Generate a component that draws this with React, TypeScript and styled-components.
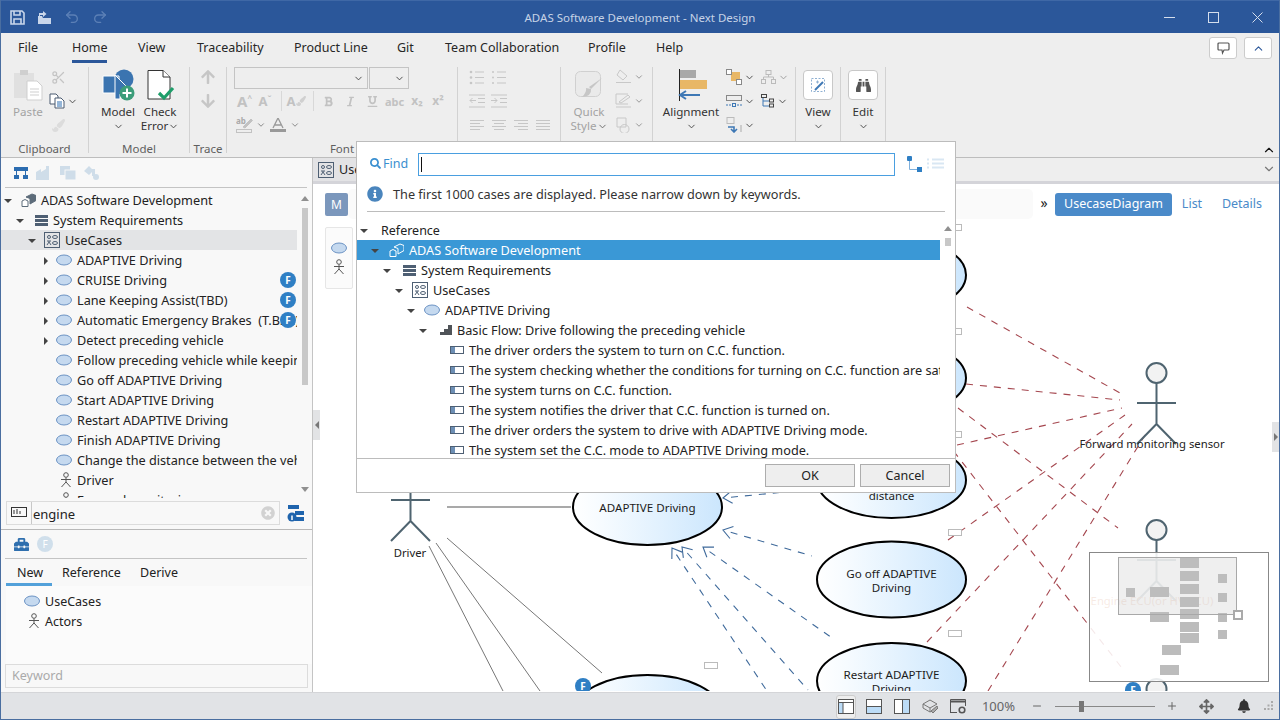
import React from 'react'
import styled, { createGlobalStyle } from 'styled-components'
import { ChevronDown, ChevronUp, Undo2, Redo2, Scissors, Minus, Plus } from 'lucide-react'
import { FaBell, FaBinoculars, FaInfoCircle, FaSearch, FaArrowUp, FaArrowDown, FaBold, FaItalic, FaUnderline, FaArrowsAlt, FaPaintBrush, FaTimesCircle, FaToolbox } from 'react-icons/fa'

const Global = createGlobalStyle`
  html, body { margin: 0; padding: 0; width: 1280px; height: 720px; overflow: hidden; }
  body { font-family: "Noto Sans", "Open Sans", sans-serif; font-size: 12.5px; color: #222; }
  * { box-sizing: border-box; }
`

const Win = styled.div`
  position: relative;
  width: 1280px;
  height: 720px;
  display: flex;
  flex-direction: column;
  background: #eee;
  border-left: 1px solid #4a6ea0;
  border-right: 1px solid #4a6ea0;
  border-bottom: 1px solid #4a6ea0;
  overflow: hidden;
`
const TitleBar = styled.div`
  height: 33px;
  flex: none;
  margin: 0 -1px;
  background: #2b579a;
  border-top: 1px solid #3f68a6;
  display: grid;
  grid-template-columns: 1fr auto 1fr;
  align-items: center;
`
const Qat = styled.div`
  display: flex;
  align-items: center;
  gap: 12px;
  padding-left: 10px;
`
const Title = styled.div`
  color: #c6d3e6;
  font-size: 11.5px;
`
const WinBtns = styled.div`
  display: flex;
  justify-content: flex-end;
  padding-right: 1px;
`
const WinBtn = styled.div`
  width: 44px;
  display: flex;
  justify-content: center;
  align-items: center;
`
const MenuRow = styled.div`
  height: 30px;
  flex: none;
  display: flex;
  padding-left: 17px;
  position: relative;
`
const MenuTab = styled.div<{ $w: number; $on?: boolean }>`
  width: ${p => p.$w}px;
  height: 30px;
  line-height: 29px;
  font-size: 12.5px;
  color: #262626;
  white-space: nowrap;
  position: relative;
  ${p =>
    p.$on &&
    `&::after { content: ''; position: absolute; left: 0; width: 35px; bottom: 0; height: 3px; background: #2b579a; }`}
`
const TopBtns = styled.div`
  position: absolute;
  right: 7px;
  top: 4px;
  display: flex;
  gap: 7px;
`
const TopBtn = styled.div`
  width: 28px;
  height: 22px;
  background: #fff;
  border: 1px solid #ccc;
  border-radius: 3px;
  display: flex;
  align-items: center;
  justify-content: center;
`
const Ribbon = styled.div`
  height: 95px;
  flex: none;
  display: flex;
  border-bottom: 1px solid #bdbdbd;
  position: relative;
`
const Group = styled.div<{ $w: number }>`
  width: ${p => p.$w}px;
  flex: none;
  display: flex;
  flex-direction: column;
  position: relative;
  margin: 4px 0 4px;
  border-right: 1px solid #d2d2d2;
`
const GroupBody = styled.div<{ $pad?: number }>`
  flex: 1;
  display: flex;
  padding-left: ${p => p.$pad ?? 0}px;
`
const GroupLabel = styled.div`
  height: 9px;
  line-height: 10px;
  text-align: center;
  font-size: 11.5px;
  color: #5f5f5f;
`
const Big = styled.div<{ $w: number; $off?: boolean }>`
  width: ${p => p.$w}px;
  display: flex;
  flex-direction: column;
  align-items: center;
  flex: none;
  color: ${p => (p.$off ? '#a3a3a3' : '#333')};
  font-size: 11.6px;
  line-height: 14px;
  white-space: nowrap;
`
const BigIcon = styled.div`
  height: 36px;
  display: flex;
  align-items: center;
  justify-content: center;
  margin-bottom: 2px;
`
const BigLine = styled.div`
  height: 14px;
  display: flex;
  align-items: center;
  justify-content: center;
`
const SmallCol = styled.div<{ $w: number }>`
  width: ${p => p.$w}px;
  flex: none;
  display: flex;
  flex-direction: column;
  margin-top: -2px;
`
const SmallItem = styled.div<{ $pad?: number }>`
  height: 24px;
  display: flex;
  align-items: center;
  gap: 2px;
  padding-left: ${p => p.$pad ?? 0}px;
`
const Combo = styled.div<{ $w: number }>`
  width: ${p => p.$w}px;
  height: 22px;
  border: 1px solid #c4c4c4;
  display: flex;
  align-items: center;
  justify-content: flex-end;
  padding-right: 3px;
  margin-right: 1px;
`
const FontBox = styled.div`
  display: flex;
  flex-direction: column;
  padding: 0 0 0 7px;
`
const FontRow = styled.div<{ $h: number }>`
  display: flex;
  align-items: center;
  height: ${p => p.$h}px;
`
const FontCell = styled.div<{ $w: number; $fs?: number }>`
  width: ${p => p.$w}px;
  display: flex;
  justify-content: center;
  align-items: center;
  color: #c2c2c2;
  font-size: ${p => p.$fs ?? 11}px;
  font-weight: 700;
  line-height: 1;
`
const Hat = styled.span`
  font-size: 8px;
  align-self: flex-start;
`
const VSep = styled.div`
  width: 1px;
  height: 20px;
  background: #d8d8d8;
  margin: 0 3px 0 6px;
`
const ParaGrid = styled.div`
  display: grid;
  grid-template-columns: repeat(4, 22px);
  grid-auto-rows: 24px;
  margin-top: -2px;
  padding-left: 8px;
  align-items: center;
  justify-items: center;
`
const OffBtn = styled.div`
  width: 30px;
  height: 30px;
  background: #fff;
  border: 1px solid #c8c8c8;
  border-radius: 4px;
  display: flex;
  align-items: center;
  justify-content: center;
`
const CollapseMark = styled.div`
  position: absolute;
  right: 3px;
  bottom: 0;
  height: 14px;
  display: flex;
  color: #111;
`
const Main = styled.div`
  flex: 1;
  min-height: 0;
  display: flex;
  position: relative;
`
const LeftPane = styled.div`
  width: 312px;
  flex: none;
  display: flex;
  flex-direction: column;
  background: #f8f8f8;
  border-right: 1px solid #c4c4c4;
`
const PaneBar = styled.div<{ $h: number }>`
  height: ${p => p.$h}px;
  flex: none;
  display: flex;
  align-items: center;
  gap: 8px;
  margin: 0 5px 0 4px;
  padding: 0 10px 0 9px;
  border-bottom: 1px solid #c4c4c4;
`
const TreeZone = styled.div`
  height: 310px;
  flex: none;
  display: flex;
  padding-top: 2px;
  overflow: hidden;
`
const TreeCol = styled.div`
  width: 296px;
  flex: none;
`
const Row = styled.div<{ $level: number; $sel?: 'gray' | 'blue'; $base?: number }>`
  position: relative;
  height: 20px;
  display: flex;
  align-items: center;
  white-space: pre;
  overflow: hidden;
  padding-left: ${p => (p.$base ?? 2) + p.$level * 12}px;
  background: ${p => (p.$sel === 'gray' ? '#e3e4e6' : p.$sel === 'blue' ? '#3a98d6' : 'transparent')};
  color: ${p => (p.$sel === 'blue' ? '#fff' : '#222')};
  font-size: 12.7px;
`
const Caret = styled.div<{ $open?: boolean; $hide?: boolean }>`
  width: 10px;
  flex: none;
  height: 10px;
  margin-top: 1px;
  display: flex;
  align-items: center;
  justify-content: center;
  visibility: ${p => (p.$hide ? 'hidden' : 'visible')};
  &::before {
    content: '';
    border-style: solid;
    ${p =>
      p.$open
        ? `border-width: 4px 4px 0 4px; border-color: #444 transparent transparent transparent;`
        : `border-width: 4px 0 4px 4px; border-color: transparent transparent transparent #444; transform: translateX(2px);`}
  }
`
const RowIcon = styled.div<{ $w: number }>`
  width: ${p => p.$w}px;
  flex: none;
  display: flex;
  justify-content: flex-end;
  align-items: center;
  padding-right: 5px;
`
const Badge = styled.div`
  position: absolute;
  right: 1px;
  top: 2px;
  width: 16px;
  height: 16px;
  border-radius: 50%;
  background: #2f7fc4;
  color: #fff;
  font-size: 10px;
  font-weight: 700;
  display: flex;
  align-items: center;
  justify-content: center;
`
const ScrollTrack = styled.div<{ $h: number; $thumbTop: number; $thumbH: number }>`
  position: relative;
  width: 6px;
  height: ${p => p.$h}px;
  margin-left: 5px;
  flex: none;
  &::before {
    content: '';
    position: absolute;
    left: 0;
    top: ${p => p.$thumbTop}px;
    width: 6px;
    height: ${p => p.$thumbH}px;
    background: #c8c8c8;
  }
`
const ScrollArrow = styled.div<{ $down?: boolean }>`
  position: absolute;
  left: -1px;
  ${p => (p.$down ? 'bottom: 6px;' : 'top: 6px;')}
  border-style: solid;
  border-width: ${p => (p.$down ? '5px 4px 0 4px' : '0 4px 5px 4px')};
  border-color: ${p => (p.$down ? '#909090 transparent transparent' : 'transparent transparent #909090')};
`
const SearchRow = styled.div`
  height: 32px;
  flex: none;
  display: flex;
  align-items: center;
  gap: 7px;
  padding: 0 0 1px 5px;
  border-bottom: 1px solid #b8b8b8;
`
const SearchBox = styled.div`
  width: 274px;
  height: 24px;
  border: 1px solid #dcdcdc;
  display: flex;
  align-items: center;
  font-size: 13px;
  padding-right: 4px;
`
const SearchLead = styled.div`
  width: 25px;
  height: 22px;
  border-right: 1px solid #c8c8c8;
  display: flex;
  align-items: center;
  justify-content: center;
  margin-right: 1px;
  flex: none;
`
const SearchText = styled.div`
  flex: 1;
  padding-top: 1px;
`
const TabsRow = styled.div`
  height: 27px;
  flex: none;
  display: flex;
  padding-left: 5px;
`
const PaneTab = styled.div<{ $w: number; $on?: boolean }>`
  width: ${p => p.$w}px;
  height: 27px;
  line-height: 27px;
  padding-left: ${p => (p.$on ? 11 : 10)}px;
  border-bottom: 3px solid ${p => (p.$on ? '#53a1da' : 'transparent')};
  font-size: 12.5px;
`
const PaletteList = styled.div`
  flex: 1;
  background: #fbfbfb;
  margin-left: 5px;
  padding-top: 5px;
`
const PaletteRow = styled.div`
  height: 20px;
  display: flex;
  align-items: center;
  font-size: 12.5px;
`
const PaletteIcon = styled.div`
  width: 39px;
  flex: none;
  display: flex;
  justify-content: flex-end;
  padding-right: 5px;
`
const KeywordBox = styled.div`
  height: 24px;
  flex: none;
  margin: 0 4px 4px 4px;
  border: 1px solid #dcdcdc;
  background: #f8f8f8;
  padding-left: 6px;
  line-height: 22px;
  color: #aaa;
  font-size: 12.5px;
`
const Doc = styled.div`
  flex: 1;
  min-width: 0;
  display: flex;
  flex-direction: column;
`
const DocTabs = styled.div`
  height: 23px;
  flex: none;
  display: flex;
  align-items: center;
  background: #eee;
  position: relative;
`
const DocTab = styled.div`
  height: 23px;
  width: 60px;
  padding-left: 5px;
  display: flex;
  align-items: center;
  gap: 5px;
  background: #e3e3e5;
  font-size: 12.5px;
`
const DocChevron = styled.div`
  position: absolute;
  right: 3px;
  top: 4px;
  color: #777;
  display: flex;
`
const DocRule = styled.div`
  height: 3px;
  flex: none;
  background: #d4d4d9;
`
const Canvas = styled.div`
  flex: 1;
  min-height: 0;
  position: relative;
  background: #fff;
  overflow: hidden;
`
const DiagramSvg = styled.svg`
  position: absolute;
  left: 0;
  top: 0;
`
const DocHead = styled.div`
  position: relative;
  display: flex;
  align-items: center;
  height: 30px;
  margin: 5px 0 0 12px;
`
const ModelMark = styled.div`
  width: 23px;
  height: 23px;
  background: #7b97bc;
  border-radius: 2px;
  color: #fff;
  font-size: 12px;
  display: flex;
  align-items: center;
  justify-content: center;
  flex: none;
`
const Crumb = styled.div`
  width: 685px;
  height: 30px;
  flex: none;
  background: #fafafa;
  border-radius: 5px;
`
const Chev = styled.div`
  width: 22px;
  flex: none;
  text-align: center;
  font-size: 14px;
  color: #222;
  margin-top: -3px;
`
const ViewTab = styled.div<{ $on?: boolean; $w: number }>`
  width: ${p => p.$w}px;
  flex: none;
  height: 23px;
  line-height: 22px;
  text-align: center;
  border-radius: 3px;
  font-size: 12.5px;
  background: ${p => (p.$on ? '#4a8ac9' : 'transparent')};
  color: ${p => (p.$on ? '#fff' : '#4a8ac9')};
`
const SidePalette = styled.div`
  position: relative;
  margin: 8px 0 0 12px;
  width: 28px;
  height: 62px;
  background: #fbfbfb;
  border: 1px solid #e6e6e6;
  border-radius: 2px;
  display: flex;
  flex-direction: column;
  align-items: center;
  justify-content: center;
  gap: 5px;
`
const Handle = styled.div<{ $side: 'left' | 'right'; $y: number }>`
  position: absolute;
  top: ${p => p.$y}px;
  ${p => (p.$side === 'left' ? 'left: 312px;' : 'right: 0;')}
  width: 7px;
  height: 30px;
  background: #e2e3e5;
  display: flex;
  align-items: center;
  justify-content: center;
  &::before {
    content: '';
    border-style: solid;
    ${p =>
      p.$side === 'left'
        ? 'border-width: 4px 4px 4px 0; border-color: transparent #777 transparent transparent;'
        : 'border-width: 4px 0 4px 4px; border-color: transparent transparent transparent #777;'}
  }
`
const Minimap = styled.div`
  position: absolute;
  right: 10px;
  bottom: 10px;
  width: 180px;
  height: 130px;
  background: rgba(255, 255, 255, 0.88);
  border: 1px solid #888;
`
const MiniNode = styled.div<{ $x: number; $y: number; $w: number; $h: number }>`
  position: absolute;
  left: ${p => p.$x}px;
  top: ${p => p.$y}px;
  width: ${p => p.$w}px;
  height: ${p => p.$h}px;
  background: #bcbcbc;
`
const MiniView = styled.div`
  position: absolute;
  left: 28px;
  top: 4px;
  width: 119px;
  height: 58px;
  background: rgba(190, 190, 190, 0.25);
  border: 1px solid #a8a8a8;
`
const MiniGrip = styled.div`
  position: absolute;
  left: 143px;
  top: 57px;
  width: 10px;
  height: 10px;
  background: #fff;
  border: 2px solid #aaa;
`
const StatusBar = styled.div`
  height: 27px;
  flex: none;
  display: flex;
  justify-content: flex-end;
  align-items: center;
  background: #e1e3e6;
  border-top: 1px solid #d4d5d8;
`
const StatusCell = styled.div<{ $w: number; $on?: boolean }>`
  width: ${p => p.$w}px;
  height: 24px;
  display: flex;
  align-items: center;
  justify-content: center;
  color: #666;
  font-size: 13px;
  position: relative;
  ${p =>
    p.$on &&
    `&::before { content: ''; position: absolute; left: 4px; right: 4px; top: 1px; bottom: -1px; background: #eee; border: 1px solid #ccc; border-radius: 3px; }
     & > * { position: relative; }`}
`
const SliderTrack = styled.div`
  position: relative;
  width: 100px;
  height: 1px;
  background: #888;
  &::after {
    content: '';
    position: absolute;
    left: 24px;
    top: -5px;
    width: 5px;
    height: 11px;
    background: #777;
  }
`
const Dialog = styled.div`
  position: absolute;
  left: 355px;
  top: 141px;
  width: 600px;
  height: 352px;
  background: #fff;
  border: 1px solid #bcbcbc;
  display: flex;
  flex-direction: column;
`
const FindRow = styled.div`
  height: 44px;
  flex: none;
  display: flex;
  align-items: center;
  padding: 0 10px 0 13px;
`
const FindLabel = styled.div`
  width: 48px;
  flex: none;
  display: flex;
  align-items: center;
  gap: 2px;
  margin-top: -2px;
  color: #3a8fd0;
  font-size: 12.5px;
`
const FindInput = styled.div`
  width: 477px;
  height: 23px;
  flex: none;
  border: 1px solid #4a9fe0;
  padding: 3px 0 0 2px;
  &::before {
    content: '';
    display: block;
    width: 1px;
    height: 15px;
    background: #111;
  }
`
const FindModes = styled.div`
  display: flex;
  gap: 4px;
  margin-left: 12px;
  align-items: center;
`
const InfoRow = styled.div`
  height: 26px;
  flex: none;
  margin: 0 10px;
  display: flex;
  align-items: center;
  gap: 10px;
  color: #333;
  font-size: 12.7px;
  padding: 0 0 10px 0;
  border-bottom: 1px solid #bcbcbc;
`
const DialogTree = styled.div`
  flex: 1;
  min-height: 0;
  display: flex;
  overflow: hidden;
  padding-top: 8px;
`
const DialogCol = styled.div`
  width: 583px;
  flex: none;
`
const RefRow = styled.div`
  height: 20px;
  display: flex;
  align-items: center;
  padding-left: 2px;
  gap: 12px;
  font-size: 12.5px;
`
const Foot = styled.div`
  height: 34px;
  flex: none;
  border-top: 1px solid #bcbcbc;
  display: flex;
  justify-content: flex-end;
  align-items: center;
  gap: 5px;
  padding: 0 5px 0 0;
`
const Btn = styled.div`
  width: 90px;
  height: 23px;
  line-height: 21px;
  text-align: center;
  background: #eee;
  border: 1px solid #adadad;
  font-size: 12.5px;
`

const Ellipse = ({ fill = '#c5d9ef' }: { fill?: string }) => (
  <svg width="16" height="12" viewBox="0 0 16 12">
    <ellipse cx="8" cy="6" rx="7.5" ry="5" fill={fill} stroke="#6c93c4" />
  </svg>
)
const Actor = () => (
  <svg width="12" height="16" viewBox="0 0 12 16" fill="none" stroke="#555">
    <circle cx="6" cy="3" r="2.3" />
    <path d="M6 5.5V10M1 7.5H11M6 10L1.5 15M6 10L10.5 15" />
  </svg>
)
const ModelPkg = ({ light }: { light?: boolean }) => (
  <svg width="15" height="15" viewBox="0 0 15 15">
    <path d="M5 4L11 1L15 2.5V7.5L9 11V5.5Z" fill={light ? '#3a98d6' : '#5d6c7a'} stroke={light ? '#fff' : '#5d6c7a'} />
    <path d="M1 8L4 6.5L7 8V13.5H1Z" fill={light ? '#3a98d6' : '#fff'} stroke={light ? '#fff' : '#5d6c7a'} />
  </svg>
)
const Stack = () => (
  <svg width="13" height="11" viewBox="0 0 13 11" fill="#4e5f73">
    <rect y="0" width="13" height="3" />
    <rect y="4" width="13" height="3" />
    <rect y="8" width="13" height="3" />
  </svg>
)
const UseCaseBox = () => (
  <svg width="16" height="16" viewBox="0 0 16 16" fill="none" stroke="#4e5f73">
    <rect x="0.5" y="0.5" width="15" height="15" />
    <circle cx="5" cy="5" r="1.5" />
    <ellipse cx="11" cy="5" rx="2.5" ry="1.5" />
    <path d="M3 9H7M5 9V10M3 13L5 10L7 13" />
    <ellipse cx="11" cy="11" rx="2.5" ry="1.5" />
  </svg>
)
const FlowSteps = () => (
  <svg width="12" height="10" viewBox="0 0 12 10" fill="#4f5358">
    <path d="M0 10V7H4V4H8V0H12V10Z" />
  </svg>
)
const StepBox = () => (
  <svg width="14" height="8" viewBox="0 0 14 8">
    <rect x="0.5" y="0.5" width="13" height="7" fill="#fff" stroke="#4e5f73" />
    <rect x="1" y="1" width="4" height="6" fill="#6d8fb5" />
  </svg>
)

type Item = { t: string; l: number; i?: React.ReactNode; c?: 'o' | 'c'; f?: boolean; sel?: 'gray' | 'blue' }

const leftTree: Item[] = [
  { t: 'ADAS Software Development', l: 0, i: <ModelPkg />, c: 'o' },
  { t: 'System Requirements', l: 1, i: <Stack />, c: 'o' },
  { t: 'UseCases', l: 2, i: <UseCaseBox />, c: 'o', sel: 'gray' },
  { t: 'ADAPTIVE Driving', l: 3, i: <Ellipse />, c: 'c' },
  { t: 'CRUISE Driving', l: 3, i: <Ellipse />, c: 'c', f: true },
  { t: 'Lane Keeping Assist(TBD)', l: 3, i: <Ellipse />, c: 'c', f: true },
  { t: 'Automatic Emergency Brakes  (T.B.D.)', l: 3, i: <Ellipse />, c: 'c', f: true },
  { t: 'Detect preceding vehicle', l: 3, i: <Ellipse />, c: 'c' },
  { t: 'Follow preceding vehicle while keeping the distance', l: 3, i: <Ellipse /> },
  { t: 'Go off ADAPTIVE Driving', l: 3, i: <Ellipse /> },
  { t: 'Start ADAPTIVE Driving', l: 3, i: <Ellipse /> },
  { t: 'Restart ADAPTIVE Driving', l: 3, i: <Ellipse /> },
  { t: 'Finish ADAPTIVE Driving', l: 3, i: <Ellipse /> },
  { t: 'Change the distance between the vehicles', l: 3, i: <Ellipse /> },
  { t: 'Driver', l: 3, i: <Actor /> },
  { t: 'Forward monitoring sensor', l: 3, i: <Actor /> }
]

const dialogTree: Item[] = [
  { t: 'ADAS Software Development', l: 0, i: <ModelPkg light />, c: 'o', sel: 'blue' },
  { t: 'System Requirements', l: 1, i: <Stack />, c: 'o' },
  { t: 'UseCases', l: 2, i: <UseCaseBox />, c: 'o' },
  { t: 'ADAPTIVE Driving', l: 3, i: <Ellipse />, c: 'o' },
  { t: 'Basic Flow: Drive following the preceding vehicle', l: 4, i: <FlowSteps />, c: 'o' },
  { t: 'The driver orders the system to turn on C.C. function.', l: 5, i: <StepBox /> },
  { t: 'The system checking whether the conditions for turning on C.C. function are satisfied.', l: 5, i: <StepBox /> },
  { t: 'The system turns on C.C. function.', l: 5, i: <StepBox /> },
  { t: 'The system notifies the driver that C.C. function is turned on.', l: 5, i: <StepBox /> },
  { t: 'The driver orders the system to drive with ADAPTIVE Driving mode.', l: 5, i: <StepBox /> },
  { t: 'The system set the C.C. mode to ADAPTIVE Driving mode.', l: 5, i: <StepBox /> }
]

const TreeRows = ({ items, base, iconW }: { items: Item[]; base?: number; iconW: number }) => (
  <>
    {items.map(it => (
      <Row key={it.t} $level={it.l} $sel={it.sel} $base={base}>
        <Caret $open={it.c === 'o'} $hide={!it.c} />
        <RowIcon $w={iconW}>{it.i}</RowIcon>
        {it.t}
        {it.f && <Badge>F</Badge>}
      </Row>
    ))}
  </>
)

const menus = [
  { t: 'File', w: 54 },
  { t: 'Home', w: 66, on: true },
  { t: 'View', w: 59 },
  { t: 'Traceability', w: 97 },
  { t: 'Product Line', w: 103 },
  { t: 'Git', w: 48 },
  { t: 'Team Collaboration', w: 143 },
  { t: 'Profile', w: 68 },
  { t: 'Help', w: 40 }
]

const Down = ({ c = '#444', s = 11 }: { c?: string; s?: number }) => <ChevronDown size={s} color={c} strokeWidth={2} />

const Lines = ({ kind }: { kind: string }) => {
  const c = '#c6c6c6'
  if (kind === 'bullet' || kind === 'number')
    return (
      <svg width="16" height="15" viewBox="0 0 16 15" stroke={c} fill={c}>
        {[2, 7.5, 13].map(y => (
          <g key={y}>
            <circle cx="2" cy={y} r={kind === 'bullet' ? 1.3 : 1} stroke="none" />
            <path d={`M6 ${y}H15`} />
          </g>
        ))}
      </svg>
    )
  if (kind === 'out' || kind === 'in')
    return (
      <svg width="16" height="14" viewBox="0 0 16 14" stroke={c} fill="none">
        <path d="M0 1H16M9 4.5H16M9 8.5H16M0 13H16" />
        <path d={kind === 'out' ? 'M7 6.5H1M3.5 4L1 6.5L3.5 9' : 'M0 6.5H6M3.5 4L6 6.5L3.5 9'} />
      </svg>
    )
  const ends: Record<string, number[]> = { left: [14, 10, 14, 10], center: [14, 10, 14, 10], right: [14, 10, 14, 10], just: [14, 14, 14, 14] }
  return (
    <svg width="14" height="12" viewBox="0 0 14 12" stroke={c}>
      {ends[kind].map((w, i) => {
        const x = kind === 'left' || kind === 'just' ? 0 : kind === 'center' ? (14 - w) / 2 : 14 - w
        return <path key={i} d={`M${x} ${1.5 + i * 3}H${x + w}`} />
      })}
    </svg>
  )
}

const diagramRed: [number, number, number, number][] = [
  [967, 307, 1120, 393],
  [966, 384, 1120, 400],
  [957, 445, 1122, 408],
  [948, 540, 1125, 415],
  [927, 642, 1132, 424],
  [988, 691, 1145, 435],
  [958, 408, 1118, 528],
  [945, 440, 1125, 672]
]
const diagramBlue: [number, number, number, number][] = [
  [723, 498, 785, 492],
  [723, 530, 812, 556],
  [703, 547, 835, 640],
  [682, 547, 808, 690],
  [672, 548, 767, 691]
]
const diagramGray: [number, number, number, number][] = [
  [447, 538, 602, 673],
  [436, 543, 540, 691],
  [429, 546, 503, 691]
]
const tinyLabels = [
  [948, 224],
  [948, 328],
  [948, 431],
  [948, 529],
  [948, 630],
  [704, 662]
]
const useCases = [
  { x: 891.5, y: 275, t: [] as string[], b: [] as number[] },
  { x: 891.5, y: 378, t: [] as string[], b: [] as number[] },
  { x: 891.5, y: 480, t: ['distance'], b: [19.5] },
  { x: 647.5, y: 507, t: ['ADAPTIVE Driving'], b: [5] },
  { x: 891.5, y: 579.5, t: ['Go off ADAPTIVE', 'Driving'], b: [-2, 12] },
  { x: 891.5, y: 681, t: ['Restart ADAPTIVE', 'Driving'], b: [-2, 12] },
  { x: 647.5, y: 713, t: [] as string[], b: [] as number[] }
]
const actors = [
  { x: 410.5, y: 470, label: 'Driver', c: '#222', lx: 410, ly: 557 },
  { x: 1156.5, y: 373, label: 'Forward monitoring sensor', c: '#222', lx: 1152, ly: 448 },
  { x: 1156.5, y: 530, label: 'Engine ECU(or HV-ECU)', c: '#b9561c', lx: 1152, ly: 605 },
  { x: 1156.5, y: 689, label: '', c: '#222', lx: 0, ly: 0 }
]

const Diagram = () => (
  <DiagramSvg width="966" height="507" viewBox="313 184 966 507">
    <defs>
      <linearGradient id="uc" x1="0" x2="1" y1="0" y2="0">
        <stop offset="0" stopColor="#ffffff" />
        <stop offset="0.2" stopColor="#f6fbff" />
        <stop offset="1" stopColor="#cbe6fd" />
      </linearGradient>
    </defs>
    <path d="M447 507H571" stroke="#a9a9a9" strokeWidth="2" />
    {diagramGray.map(([a, b, c, d]) => (
      <line key={a} x1={a} y1={b} x2={c} y2={d} stroke="#777" />
    ))}
    {diagramRed.map(([a, b, c, d]) => (
      <line key={a} x1={a} y1={b} x2={c} y2={d} stroke="#a5474f" strokeWidth="1.1" strokeDasharray="7 7" />
    ))}
    {diagramBlue.map(([a, b, c, d]) => {
      const ang = Math.atan2(d - b, c - a)
      const tip = (da: number) => `${a + 11 * Math.cos(ang + da)} ${b + 11 * Math.sin(ang + da)}`
      return (
        <g key={a + b} stroke="#3f6a9b" fill="none" strokeWidth="1.1">
          <path d={`M${tip(0.6)}L${a} ${b}L${tip(-0.6)}`} />
          <line x1={a + 8 * Math.cos(ang)} y1={b + 8 * Math.sin(ang)} x2={c} y2={d} strokeDasharray="7 7" />
        </g>
      )
    })}
    {tinyLabels.map(([x, y]) => (
      <rect key={y} x={x + 0.5} y={y + 0.5} width="13" height="6" fill="#fff" stroke="#bbb" />
    ))}
    {useCases.map(u => (
      <g key={u.y + u.x}>
        <ellipse cx={u.x} cy={u.y} rx="74.5" ry="38" fill="url(#uc)" stroke="#000" strokeWidth="2" />
        {u.t.map((line, i) => (
          <text key={i} x={u.x} y={u.y + u.b[i]} textAnchor="middle" fontSize="11.6" fontFamily="Noto Sans, sans-serif" fill="#1c1c1c">
            {line}
          </text>
        ))}
      </g>
    ))}
    {actors.map(a => (
      <g key={a.y}>
        <g stroke="#4f6470" strokeWidth="2" fill="#f2f2f2">
          <circle cx={a.x} cy={a.y} r="10" />
          <path d={`M${a.x} ${a.y + 10}V${a.y + 51}M${a.x - 19.5} ${a.y + 30}H${a.x + 19.5}M${a.x - 19.5} ${a.y + 71}L${a.x} ${a.y + 51}L${a.x + 19.5} ${a.y + 71}`} fill="none" />
        </g>
        {a.label && (
          <text x={a.lx} y={a.ly} textAnchor="middle" fontSize="11.3" fontFamily="Noto Sans, sans-serif" fill={a.c}>
            {a.label}
          </text>
        )}
      </g>
    ))}
    <circle cx="583" cy="686" r="8" fill="#2f7fc4" />
    <text x="583" y="690" textAnchor="middle" fontSize="10" fontWeight="700" fontFamily="Noto Sans, sans-serif" fill="#fff">
      F
    </text>
    <circle cx="1133" cy="690" r="8" fill="#2f7fc4" />
    <text x="1133" y="694" textAnchor="middle" fontSize="10" fontWeight="700" fontFamily="Noto Sans, sans-serif" fill="#fff">
      F
    </text>
  </DiagramSvg>
)

const miniNodes = [
  ...[5, 18, 31, 44, 56, 69, 80].map(y => [90, y, 19, 10]),
  [36, 35, 9, 9],
  [60, 34, 19, 10],
  [60, 59, 19, 10],
  ...[21, 40, 60, 77].map(y => [128, y, 9, 9]),
  [72, 92, 19, 10],
  [70, 112, 19, 10]
]

export default function App() {
  return (
    <Win>
      <Global />
      <TitleBar>
        <Qat>
          <svg width="15" height="15" viewBox="0 0 15 15" fill="none" stroke="#c9d6ea" strokeWidth="1.6">
            <path d="M1 1H12L14 3V14H1Z" />
            <path d="M4 1V5H10V1M4 14V9H11V14" />
          </svg>
          <svg width="15" height="15" viewBox="0 0 15 15" fill="#c9d6ea">
            <path d="M1 6H5L6 8H14V14H1Z" />
            <path d="M2 3H6V1L9.5 4L6 7V5H3V6H2Z" />
          </svg>
          <Undo2 size={16} color="#5c80b6" strokeWidth={2} />
          <Redo2 size={16} color="#5c80b6" strokeWidth={2} />
        </Qat>
        <Title>ADAS Software Development - Next Design</Title>
        <WinBtns>
          <WinBtn>
            <svg width="11" height="11" viewBox="0 0 11 11" stroke="#d5deec"><path d="M0 5.5H11" /></svg>
          </WinBtn>
          <WinBtn>
            <svg width="11" height="11" viewBox="0 0 11 11" fill="none" stroke="#d5deec"><rect x="0.5" y="0.5" width="10" height="10" /></svg>
          </WinBtn>
          <WinBtn>
            <svg width="11" height="11" viewBox="0 0 11 11" stroke="#d5deec"><path d="M0.5 0.5L10.5 10.5M10.5 0.5L0.5 10.5" /></svg>
          </WinBtn>
        </WinBtns>
      </TitleBar>

      <MenuRow>
        {menus.map(m => (
          <MenuTab key={m.t} $w={m.w} $on={m.on}>
            {m.t}
          </MenuTab>
        ))}
        <TopBtns>
          <TopBtn>
            <svg width="13" height="13" viewBox="0 0 13 13" fill="none" stroke="#555" strokeWidth="1.2">
              <path d="M2 1H11Q12 1 12 2V7Q12 8 11 8H7L5.5 11L5 8H2Q1 8 1 7V2Q1 1 2 1Z" />
            </svg>
          </TopBtn>
          <TopBtn>
            <ChevronUp size={13} color="#2b579a" strokeWidth={2} />
          </TopBtn>
        </TopBtns>
      </MenuRow>

      <Ribbon>
        <Group $w={88}>
          <GroupBody $pad={9}>
            <Big $w={36} $off>
              <BigIcon>
                <svg width="30" height="32" viewBox="0 0 30 32">
                  <rect x="1" y="4" width="20" height="25" fill="#e0e0e0" />
                  <rect x="7" y="1" width="8" height="5" fill="#cfcfcf" />
                  <path d="M14 12H24L29 17V31H14Z" fill="#fff" stroke="#cfcfcf" />
                  <path d="M17 20H26M17 23H26M17 26H26" stroke="#cfcfcf" />
                </svg>
              </BigIcon>
              <BigLine>Paste</BigLine>
            </Big>
            <SmallCol $w={40}>
              <SmallItem $pad={5}>
                <Scissors size={15} color="#c4c4c4" />
              </SmallItem>
              <SmallItem $pad={3}>
                <svg width="16" height="16" viewBox="0 0 16 16" fill="#fff" stroke="#4a5a70">
                  <path d="M1 1H7L9 3V11H1Z" />
                  <path d="M6 5H12L15 8V15H6Z" />
                  <path d="M8 9H13M8 11H13M8 13H13" stroke="#2b6cb0" />
                </svg>
                <Down />
              </SmallItem>
              <SmallItem $pad={6}>
                <FaPaintBrush size={13} color="#dcdcdc" />
              </SmallItem>
            </SmallCol>
          </GroupBody>
          <GroupLabel>Clipboard</GroupLabel>
        </Group>

        <Group $w={101}>
          <GroupBody $pad={9}>
            <Big $w={40}>
              <BigIcon>
                <svg width="33" height="32" viewBox="0 0 33 32">
                  <circle cx="22" cy="10" r="9.5" fill="#3b74b0" />
                  <path d="M1 7L17 7L17 24L1 24Z" fill="#3b74b0" stroke="#fff" />
                  <path d="M13 6L25 18L18 25L18 30L13 30Z" fill="#3b74b0" stroke="#fff" />
                  <circle cx="25" cy="24" r="7.5" fill="#3c9d7a" />
                  <path d="M25 19.5V28.5M20.5 24H29.5" stroke="#fff" strokeWidth="2" />
                </svg>
              </BigIcon>
              <BigLine>Model</BigLine>
              <BigLine><Down /></BigLine>
            </Big>
            <Big $w={44}>
              <BigIcon>
                <svg width="30" height="32" viewBox="0 0 30 32">
                  <path d="M3 1.5H18L25 8V30H3Z" fill="#fff" stroke="#333" />
                  <path d="M18 1.5V8H25" fill="#fff" stroke="#333" />
                  <path d="M14 24L19 29L28 19" fill="none" stroke="#1e9e6a" strokeWidth="3.2" />
                </svg>
              </BigIcon>
              <BigLine>Check</BigLine>
              <BigLine>Error<Down /></BigLine>
            </Big>
          </GroupBody>
          <GroupLabel>Model</GroupLabel>
        </Group>

        <Group $w={37}>
          <GroupBody $pad={10}>
            <SmallCol $w={24}>
              <SmallItem><FaArrowUp size={16} color="#c6c6c6" /></SmallItem>
              <SmallItem><FaArrowDown size={16} color="#c6c6c6" /></SmallItem>
            </SmallCol>
          </GroupBody>
          <GroupLabel>Trace</GroupLabel>
        </Group>

        <Group $w={231}>
          <GroupBody>
            <FontBox>
              <FontRow $h={22}>
                <Combo $w={134}><Down c="#444" /></Combo>
                <Combo $w={40}><Down c="#444" /></Combo>
              </FontRow>
              <FontRow $h={24}>
                <FontCell $w={21} $fs={15}>A<Hat>^</Hat></FontCell>
                <FontCell $w={20} $fs={13}>A<Hat>ˇ</Hat></FontCell>
                <VSep />
                <FontCell $w={22} $fs={13}>
                  A<FaPaintBrush size={10} color="#d0d0d0" />
                </FontCell>
                <VSep />
                <FontCell $w={22}><FaBold size={11} /></FontCell>
                <FontCell $w={22}><FaItalic size={11} /></FontCell>
                <FontCell $w={22}><FaUnderline size={11} /></FontCell>
                <FontCell $w={23}>abc</FontCell>
                <FontCell $w={22} $fs={12}>x₂</FontCell>
                <FontCell $w={20} $fs={12}>x²</FontCell>
              </FontRow>
              <FontRow $h={24}>
                <FontCell $w={21}>
                  <svg width="17" height="16" viewBox="0 0 17 16" fill="none" stroke="#c2c2c2">
                    <text x="0" y="7" fontSize="8" fill="#aaa" stroke="none" fontFamily="Noto Sans, sans-serif">ab</text>
                    <path d="M7 10L15 2L16.5 3.5L9 11Z" fill="#c2c2c2" />
                    <rect x="0.5" y="12.5" width="15" height="3" />
                  </svg>
                </FontCell>
                <FontCell $w={12}><Down c="#777" s={10} /></FontCell>
                <FontCell $w={22}>
                  <svg width="16" height="15" viewBox="0 0 16 15">
                    <path d="M3 10L8 0L13 10M5 7H11" fill="none" stroke="#999" strokeWidth="1.3" />
                    <rect y="11" width="16" height="3" fill="#999" />
                  </svg>
                </FontCell>
                <FontCell $w={12}><Down c="#777" s={10} /></FontCell>
              </FontRow>
            </FontBox>
          </GroupBody>
          <GroupLabel>Font</GroupLabel>
        </Group>

        <Group $w={103}>
          <GroupBody>
            <ParaGrid>
              <Lines kind="bullet" />
              <Lines kind="number" />
              <span />
              <span />
              <Lines kind="out" />
              <Lines kind="in" />
              <span />
              <span />
              <Lines kind="left" />
              <Lines kind="center" />
              <Lines kind="right" />
              <Lines kind="just" />
            </ParaGrid>
          </GroupBody>
          <GroupLabel>&nbsp;</GroupLabel>
        </Group>

        <Group $w={92}>
          <GroupBody $pad={9}>
            <Big $w={38} $off>
              <BigIcon>
                <svg width="30" height="30" viewBox="0 0 30 30">
                  <rect x="1.5" y="1.5" width="25" height="25" rx="5" fill="#eaeaea" stroke="#d0d0d0" />
                  <path d="M28 8L17 19L15 17Z" fill="#c6c6c6" />
                  <path d="M17 19Q18 26 8 27Q13 22 12 18Z" fill="#c6c6c6" />
                </svg>
              </BigIcon>
              <BigLine>Quick</BigLine>
              <BigLine>Style<Down c="#666" /></BigLine>
            </Big>
            <SmallCol $w={36}>
              {[0, 1, 2].map(i => (
                <SmallItem key={i} $pad={7}>
                  <svg width="17" height="16" viewBox="0 0 17 16" fill="none" stroke="#c8c8c8">
                    {i === 0 && <path d="M5 1L12 7L8 11L2 6ZM1 13.5H16" />}
                    {i === 1 && <path d="M1 1H13M1 1V11H13M4 9L13 2L15 4L6 10ZM1 14H16" />}
                    {i === 2 && <path d="M2 1H11V10H2ZM14 12A4.5 4.5 0 1 1 5 12A4.5 4.5 0 1 1 14 12" />}
                  </svg>
                  <Down c="#888" s={10} />
                </SmallItem>
              ))}
            </SmallCol>
          </GroupBody>
          <GroupLabel>&nbsp;</GroupLabel>
        </Group>

        <Group $w={143}>
          <GroupBody $pad={10}>
            <Big $w={56}>
              <BigIcon>
                <svg width="31" height="32" viewBox="0 0 31 32">
                  <path d="M3.5 0V32" stroke="#222" />
                  <rect x="4" y="1" width="16" height="8" fill="#a8a8a8" />
                  <rect x="4" y="11" width="27" height="9" fill="#e8b766" />
                  <path d="M4 26H24M10 22L4 26L10 30" stroke="#3e78b5" strokeWidth="2" fill="none" />
                </svg>
              </BigIcon>
              <BigLine>Alignment</BigLine>
              <BigLine><Down /></BigLine>
            </Big>
            <SmallCol $w={37}>
              <SmallItem $pad={7}>
                <svg width="16" height="16" viewBox="0 0 16 16">
                  <rect x="5" y="3" width="9" height="9" fill="#e8b766" />
                  <rect x="0.5" y="0.5" width="5" height="5" fill="#fff" stroke="#888" />
                  <rect x="10.5" y="10.5" width="5" height="5" fill="#fff" stroke="#888" />
                </svg>
                <Down />
              </SmallItem>
              <SmallItem $pad={7}>
                <svg width="16" height="14" viewBox="0 0 16 14" fill="none">
                  <rect x="0.5" y="1.5" width="15" height="5" stroke="#888" />
                  <path d="M0 11H5M11 11H16" stroke="#3e78b5" strokeDasharray="2 1" />
                  <rect x="6.5" y="9.5" width="3" height="3" stroke="#3e78b5" />
                </svg>
                <Down />
              </SmallItem>
              <SmallItem $pad={7}>
                <svg width="16" height="16" viewBox="0 0 16 16" fill="none">
                  <rect x="1" y="0.5" width="7" height="6" stroke="#bbb" />
                  <path d="M2 10H8L8 14M5 12L8 15L11 12" stroke="#3e78b5" strokeWidth="1.6" />
                  <path d="M15 8V15" stroke="#aaa" />
                </svg>
                <Down />
              </SmallItem>
            </SmallCol>
            <SmallCol $w={38}>
              <SmallItem $pad={5}>
                <svg width="15" height="14" viewBox="0 0 15 14" fill="none" stroke="#bbb">
                  <rect x="5" y="0.5" width="5" height="4" />
                  <rect x="0.5" y="9.5" width="4" height="4" />
                  <rect x="10.5" y="9.5" width="4" height="4" />
                  <path d="M7.5 4.5V7M2.5 9.5V7H12.5V9.5" />
                </svg>
                <Down c="#999" />
              </SmallItem>
              <SmallItem $pad={5}>
                <svg width="14" height="14" viewBox="0 0 14 14" fill="none">
                  <path d="M2 4V12H8M2 7H8" stroke="#3e78b5" />
                  <rect x="0.5" y="0.5" width="5" height="3" stroke="#444" />
                  <rect x="8.5" y="5" width="4" height="3" stroke="#444" />
                  <rect x="8.5" y="10" width="4" height="3" stroke="#444" />
                </svg>
                <Down />
              </SmallItem>
            </SmallCol>
          </GroupBody>
          <GroupLabel>&nbsp;</GroupLabel>
        </Group>

        <Group $w={45}>
          <GroupBody $pad={7}>
            <Big $w={30}>
              <BigIcon>
                <OffBtn>
                  <svg width="16" height="16" viewBox="0 0 16 16" fill="none">
                    <rect x="1.5" y="1.5" width="13" height="13" stroke="#8fb0d2" strokeDasharray="2 1.5" />
                    <path d="M5 13L13 5" stroke="#3e78b5" strokeWidth="2" />
                    <path d="M6 5H9M7.5 3.5V6.5" stroke="#8fb0d2" />
                  </svg>
                </OffBtn>
              </BigIcon>
              <BigLine>View</BigLine>
              <BigLine><Down /></BigLine>
            </Big>
          </GroupBody>
          <GroupLabel>&nbsp;</GroupLabel>
        </Group>

        <Group $w={45}>
          <GroupBody $pad={7}>
            <Big $w={30}>
              <BigIcon>
                <OffBtn>
                  <FaBinoculars size={15} color="#555" />
                </OffBtn>
              </BigIcon>
              <BigLine>Edit</BigLine>
              <BigLine><Down /></BigLine>
            </Big>
          </GroupBody>
          <GroupLabel>&nbsp;</GroupLabel>
        </Group>
        <CollapseMark>
          <ChevronUp size={14} strokeWidth={2} />
        </CollapseMark>
      </Ribbon>

      <Main>
        <LeftPane>
          <PaneBar $h={30}>
            <svg width="14" height="12" viewBox="0 0 14 12" fill="#2b6cb0">
              <rect width="14" height="4" />
              <rect x="0" y="8" width="5" height="4" />
              <rect x="9" y="8" width="5" height="4" />
              <path d="M2 4H3V8H2ZM11 4H12V8H11Z" />
            </svg>
            <svg width="16" height="14" viewBox="0 0 16 14" fill="#cfdde9">
              <path d="M0 14V6L5 3V6L10 3V0H13V14Z" />
            </svg>
            <svg width="16" height="14" viewBox="0 0 16 14" fill="#cfdde9">
              <rect width="10" height="9" />
              <rect x="5" y="4" width="11" height="10" stroke="#f8f8f8" />
            </svg>
            <svg width="16" height="14" viewBox="0 0 16 14" fill="#cfdde9">
              <path d="M0 5L5 0L8 3H11V10H8V6L5 9Z" />
              <circle cx="12" cy="11" r="3" />
            </svg>
          </PaneBar>
          <TreeZone>
            <TreeCol>
              <TreeRows items={leftTree} iconW={28} />
            </TreeCol>
            <ScrollTrack $h={308} $thumbTop={18} $thumbH={177}>
              <ScrollArrow />
              <ScrollArrow $down />
            </ScrollTrack>
          </TreeZone>
          <SearchRow>
            <SearchBox>
              <SearchLead>
                <svg width="17" height="12" viewBox="0 0 17 12" fill="none" stroke="#333">
                  <rect x="0.5" y="0.5" width="15" height="9" />
                  <path d="M3 3V7M6 2V7M9 4V7" />
                </svg>
              </SearchLead>
              <SearchText>engine</SearchText>
              <FaTimesCircle size={14} color="#d2d2d2" />
            </SearchBox>
            <svg width="17" height="17" viewBox="0 0 17 17">
              <rect x="1" y="0" width="11" height="4" fill="#1f64ad" />
              <rect x="8" y="6" width="9" height="4" fill="#1f64ad" />
              <rect x="8" y="12" width="9" height="4" fill="#1f64ad" />
              <circle cx="5" cy="12" r="4.5" fill="#1f64ad" />
              <path d="M5 10.5V15" stroke="#fff" strokeWidth="1.5" />
            </svg>
          </SearchRow>
          <PaneBar $h={29}>
            <FaToolbox size={15} color="#2f6fae" />
            <svg width="16" height="16" viewBox="0 0 16 16">
              <circle cx="8" cy="8" r="8" fill="#d0dfeb" />
              <text x="8" y="11.5" textAnchor="middle" fontSize="10" fill="#fff" fontFamily="Noto Sans, sans-serif">F</text>
            </svg>
          </PaneBar>
          <TabsRow>
            <PaneTab $w={46} $on>New</PaneTab>
            <PaneTab $w={78}>Reference</PaneTab>
            <PaneTab $w={70}>Derive</PaneTab>
          </TabsRow>
          <PaletteList>
            <PaletteRow>
              <PaletteIcon><Ellipse /></PaletteIcon>
              UseCases
            </PaletteRow>
            <PaletteRow>
              <PaletteIcon><Actor /></PaletteIcon>
              Actors
            </PaletteRow>
          </PaletteList>
          <KeywordBox>Keyword</KeywordBox>
        </LeftPane>

        <Doc>
          <DocTabs>
            <DocTab>
              <UseCaseBox />
              Use
            </DocTab>
            <DocChevron><ChevronDown size={14} strokeWidth={2} /></DocChevron>
          </DocTabs>
          <DocRule />
          <Canvas>
            <Diagram />
            <DocHead>
              <ModelMark>M</ModelMark>
              <Crumb />
              <Chev>»</Chev>
              <ViewTab $on $w={117}>UsecaseDiagram</ViewTab>
              <ViewTab $w={40}>List</ViewTab>
              <ViewTab $w={60}>Details</ViewTab>
            </DocHead>
            <SidePalette>
              <Ellipse />
              <Actor />
            </SidePalette>
            <Minimap>
              {miniNodes.map(([x, y, w, h]) => (
                <MiniNode key={`${x}-${y}`} $x={x} $y={y} $w={w} $h={h} />
              ))}
              <MiniView />
              <MiniGrip />
            </Minimap>
          </Canvas>
        </Doc>
        <Handle $side="left" $y={252} />
        <Handle $side="right" $y={264} />
      </Main>

      <StatusBar>
        <StatusCell $w={28} $on>
          <svg width="16" height="15" viewBox="0 0 16 15">
            <rect x="0.5" y="0.5" width="15" height="14" fill="#fff" stroke="#555" />
            <rect x="1" y="4" width="4" height="10" fill="#bcdcf7" />
            <path d="M0 3.5H16M5 4V15" stroke="#555" />
          </svg>
        </StatusCell>
        <StatusCell $w={28}>
          <svg width="16" height="15" viewBox="0 0 16 15">
            <rect x="0.5" y="0.5" width="15" height="14" fill="#fff" stroke="#555" />
            <rect x="1" y="8" width="14" height="6" fill="#bcdcf7" />
            <path d="M0 7.5H16" stroke="#555" />
          </svg>
        </StatusCell>
        <StatusCell $w={28}>
          <svg width="16" height="15" viewBox="0 0 16 15">
            <rect x="0.5" y="0.5" width="15" height="14" fill="#fff" stroke="#555" />
            <rect x="9" y="1" width="6" height="13" fill="#bcdcf7" />
            <path d="M8.5 0V15" stroke="#555" />
          </svg>
        </StatusCell>
        <StatusCell $w={28}>
          <svg width="16" height="15" viewBox="0 0 16 15" fill="none" stroke="#777">
            <path d="M1 5L8 1L15 5L8 9ZM1 5V9L8 13L10 12M8 9V13" />
            <path d="M9 12L15 7L16 9L11 14Z" fill="#aaa" />
          </svg>
        </StatusCell>
        <StatusCell $w={28}>
          <svg width="16" height="15" viewBox="0 0 16 15" fill="none" stroke="#555">
            <path d="M0.5 14V0.5H15.5V7M0.5 13.5H7" />
            <path d="M0 2.5H16" strokeWidth="2" />
            <circle cx="12" cy="11" r="2.8" strokeWidth="1.6" />
          </svg>
        </StatusCell>
        <StatusCell $w={53}>100%</StatusCell>
        <StatusCell $w={24}><Minus size={12} color="#666" /></StatusCell>
        <StatusCell $w={112}><SliderTrack /></StatusCell>
        <StatusCell $w={22}><Plus size={12} color="#666" /></StatusCell>
        <StatusCell $w={46}><FaArrowsAlt size={15} color="#666" /></StatusCell>
        <StatusCell $w={30}><FaBell size={14} color="#333" /></StatusCell>
        <StatusCell $w={20}>
          <svg width="10" height="10" viewBox="0 0 10 10" fill="#aaa">
            <rect x="7" y="0" width="2" height="2" />
            <rect x="3.5" y="3.5" width="2" height="2" />
            <rect x="7" y="3.5" width="2" height="2" />
            <rect x="0" y="7" width="2" height="2" />
            <rect x="3.5" y="7" width="2" height="2" />
            <rect x="7" y="7" width="2" height="2" />
          </svg>
        </StatusCell>
      </StatusBar>

      <Dialog>
        <FindRow>
          <FindLabel>
            <FaSearch size={11} />
            Find
          </FindLabel>
          <FindInput />
          <FindModes>
            <svg width="16" height="16" viewBox="0 0 16 16" fill="#2f7fc4">
              <rect x="0" y="0" width="5" height="5" rx="1" />
              <rect x="10" y="11" width="5" height="5" />
              <path d="M2.5 5V13.5H10" fill="none" stroke="#7fb0dc" />
            </svg>
            <svg width="17" height="12" viewBox="0 0 17 12" stroke="#d9e7f3" fill="#d9e7f3">
              <path d="M5 1.5H17M5 5.5H17M5 9.5H17M0 1.5H2M0 5.5H2M0 9.5H2" strokeWidth="2" />
            </svg>
          </FindModes>
        </FindRow>
        <InfoRow>
          <FaInfoCircle size={16} color="#4a85bd" />
          The first 1000 cases are displayed. Please narrow down by keywords.
        </InfoRow>
        <DialogTree>
          <DialogCol>
            <RefRow>
              <Caret $open />
              Reference
            </RefRow>
            <TreeRows items={dialogTree} base={13} iconW={29} />
          </DialogCol>
          <ScrollTrack $h={300} $thumbTop={18} $thumbH={8}>
            <ScrollArrow />
            <ScrollArrow $down />
          </ScrollTrack>
        </DialogTree>
        <Foot>
          <Btn>OK</Btn>
          <Btn>Cancel</Btn>
        </Foot>
      </Dialog>
    </Win>
  )
}
